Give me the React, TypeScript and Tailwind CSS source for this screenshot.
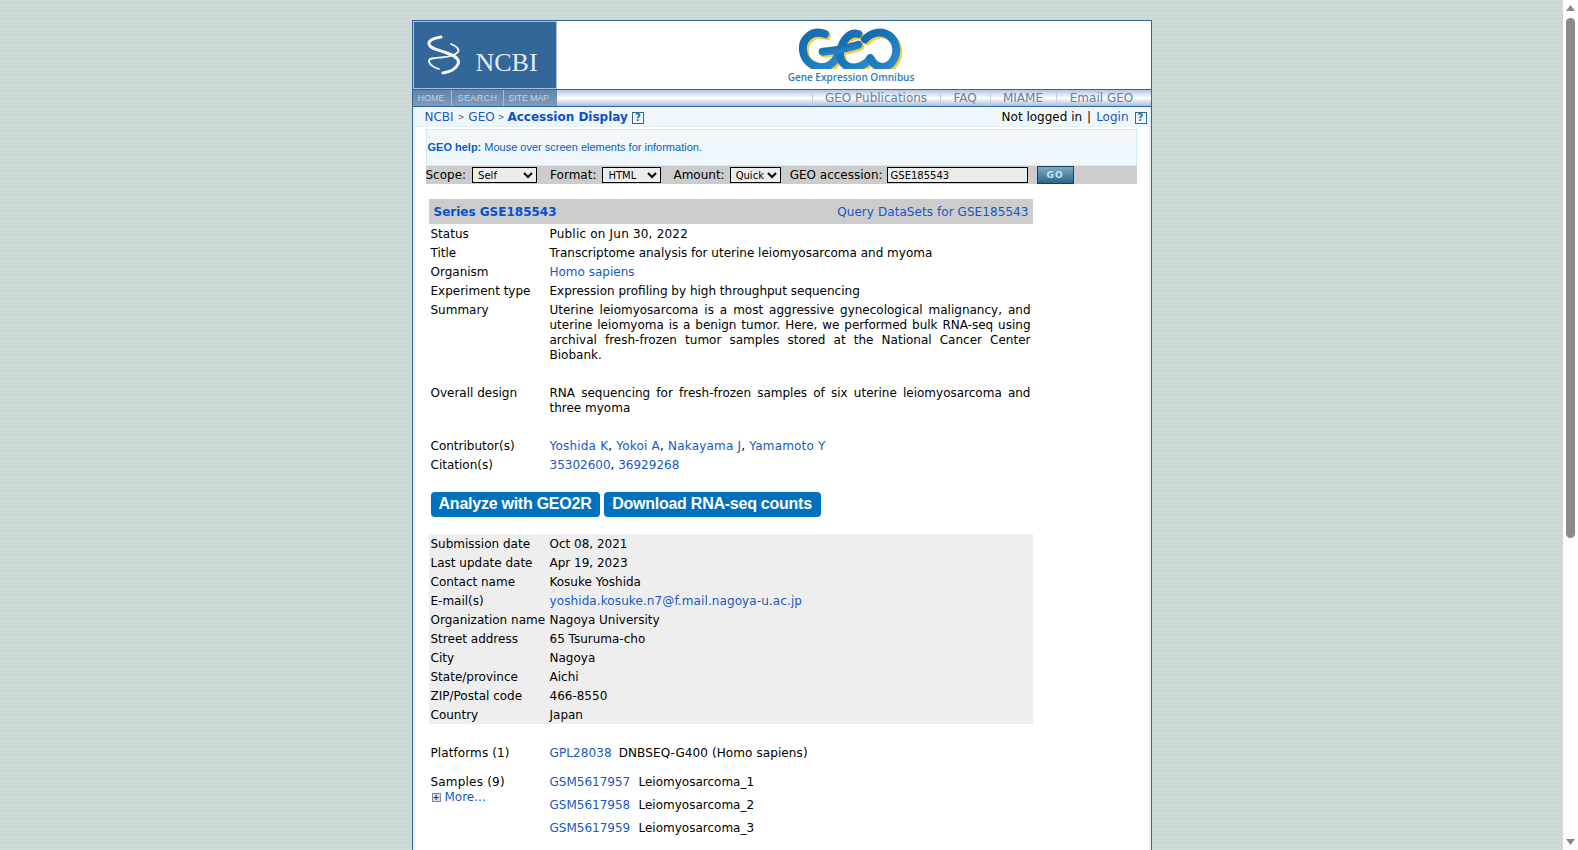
const LINK = "text-[#1558c8]";

const TOP_LINKS = [
  { label: "GEO Publications", w: "w-[128px]" },
  { label: "FAQ", w: "w-[50px]" },
  { label: "MIAME", w: "w-[66px]" },
  { label: "Email GEO", w: "w-[91px]" },
];

const CONTACT = [
  ["Submission date", "Oct 08, 2021"],
  ["Last update date", "Apr 19, 2023"],
  ["Contact name", "Kosuke Yoshida"],
  ["E-mail(s)", "yoshida.kosuke.n7@f.mail.nagoya-u.ac.jp"],
  ["Organization name", "Nagoya University"],
  ["Street address", "65 Tsuruma-cho"],
  ["City", "Nagoya"],
  ["State/province", "Aichi"],
  ["ZIP/Postal code", "466-8550"],
  ["Country", "Japan"],
];

function HelpMark() {
  return (
    <span className="inline-flex h-[12px] w-[12px] items-center justify-center border border-[#336699] text-[10px] leading-none font-bold text-[#336699]">
      ?
    </span>
  );
}

function HelixLogo() {
  return (
    <svg width="34" height="40" viewBox="0 0 34 40" className="shrink-0">
      <g fill="none" stroke="#f4f7fa" strokeLinecap="round">
        <path d="M14 2 C7 3 1.5 5 2 9 C3 14 12 15 20 18 C28 21 33 24 31 29 C29 34 22 37 16 38" strokeWidth="3" />
        <path d="M24 9 C29 11 33 14 31 17 C28 21 20 22 14 22.5 C8 23 2 23 2 26 C2 30 8 33 12 34" strokeWidth="1.8" />
      </g>
    </svg>
  );
}

function GeoLogo() {
  const strokes = [
    "M132 42 C95 28 62 55 66 92 C70 130 110 150 140 138 C158 130 168 115 172 100",
    "M232 42 C205 35 185 60 178 92 C172 125 195 145 225 142 C245 138 258 128 268 115",
    "M125 95 C160 92 200 85 232 74",
    "M268 115 C278 140 310 150 330 130 C352 105 352 70 325 47 C300 30 270 38 252 58",
  ];
  return (
    <svg width="140" height="48" viewBox="0 0 420 144" className="shrink-0">
      <defs>
        <linearGradient id="geoBlue" x1="0" y1="0" x2="1" y2="1">
          <stop offset="0" stopColor="#1469ab" />
          <stop offset="0.5" stopColor="#1a78bf" />
          <stop offset="1" stopColor="#2a8ccf" />
        </linearGradient>
      </defs>
      <g transform="translate(0 -3)">
        <g fill="none" stroke="#f6cc45" strokeWidth="24" strokeLinecap="round" transform="translate(6 6)">
          {strokes.map((d) => (
            <path key={d} d={d} />
          ))}
        </g>
        <g fill="none" stroke="url(#geoBlue)" strokeWidth="24" strokeLinecap="round">
          {strokes.map((d) => (
            <path key={d} d={d} />
          ))}
        </g>
      </g>
    </svg>
  );
}

function Row({ label, children, className = "" }: { label: string; children: React.ReactNode; className?: string }) {
  return (
    <div className={`flex pl-[2px] ${className}`}>
      <div className="w-[119px] shrink-0 pt-[3px] pb-[1px]">{label}</div>
      <div className="min-w-0 flex-1 pt-[3px] pr-[2px] pb-[1px]">{children}</div>
    </div>
  );
}

function Sample({ id, title }: { id: string; title: string }) {
  return (
    <div className="flex h-[23px] items-center pt-[2px]">
      <a className={`${LINK} w-[89px]`}>{id}</a>
      <span>{title}</span>
    </div>
  );
}

export default function App() {
  return (
    <div className="flex h-screen overflow-hidden font-['DejaVu_Sans',Verdana,sans-serif] text-[12px] leading-[15px] text-black">
      <main className="min-w-0 flex-1 bg-[#cdd9d6] bg-[repeating-linear-gradient(180deg,#cfdbd8_0px,#cfdbd8_2px,#cad7d4_2px,#cad7d4_4px)] pt-[20px]">
        <div className="mx-auto flex min-h-full w-[740px] flex-col border-x border-[#336699] bg-white">
          {/* Masthead */}
          <div className="flex h-[69px] border-t border-[#336699]">
            <div className="flex h-full w-[144px] shrink-0 items-start gap-[15px] border border-[#a9c0d6] bg-[#336699] pt-[13px] pl-[13px]">
              <HelixLogo />
              <span className="mt-[15px] font-['Liberation_Serif',serif] text-[26px] leading-[26px] text-[#e4ebf2]">NCBI</span>
            </div>
            <div className="flex flex-1 flex-col items-center pr-[5px]">
              <GeoLogo />
              <span className="mt-[1px] font-['Open_Sans',sans-serif] text-[10px] leading-[15px] font-semibold text-[#2b7cb8]">
                Gene Expression Omnibus
              </span>
            </div>
          </div>

          <div className="flex h-[18px] border-y border-[#336699]">
            <div className="flex w-[144px] shrink-0 bg-gradient-to-b from-[#5f86ab] to-[#7c9cbc] font-['Liberation_Sans',Arial,sans-serif] text-[9px] leading-[16px] whitespace-nowrap text-[#c3d1e0]">
              <span className="w-[39px] border-r border-[#a3bacf] pl-[5px]">HOME</span>
              <span className="w-[52px] border-r border-[#a3bacf] pl-[6px] tracking-[0.4px]">SEARCH</span>
              <span className="pl-[5px] tracking-[-0.2px]">SITE MAP</span>
            </div>
            <div className="flex flex-1 justify-end bg-gradient-to-b from-[#b3c5de] via-white to-[#a9bcd9] pr-[4px]">
              {TOP_LINKS.map((l) => (
                <span
                  key={l.label}
                  className={`${l.w} flex items-center justify-center border-l border-[#c2d2e6] pt-[1px] text-[#6b7d9c]`}
                >
                  {l.label}
                </span>
              ))}
            </div>
          </div>

          {/* Page body */}
          <div className="flex flex-1 flex-col border-x-[2px] border-[#e6f2f4]">
            <div className="flex h-[20px] items-center justify-between border-b border-[#e6f2f4] bg-[#eff7fd] pt-[2px] pr-[2px] pl-[10px]">
              <div className="flex items-center">
                <a className={LINK}>NCBI</a>
                <span className="px-[4px] text-[8px] text-[#555555]">&gt;</span>
                <a className={LINK}>GEO</a>
                <span className="px-[3px] text-[8px] text-[#555555]">&gt;</span>
                <span className="font-bold text-[#0a50c8]">Accession Display</span>
                <span className="ml-[4px] flex"><HelpMark /></span>
              </div>
              <div className="flex items-center">
                <span>Not logged in</span>
                <span className="mx-[5px]">|</span>
                <a className={LINK}>Login</a>
                <span className="ml-[6px] flex"><HelpMark /></span>
              </div>
            </div>

            <div className="mt-[2px] ml-[11px] w-[711px]">
              <div className="flex h-[37px] items-center border border-[#c4f0f4] bg-[#eff7fd] pl-[1px] font-['Liberation_Sans',Arial,sans-serif] text-[11px] text-[#0b5cbf]">
                <b className="mr-[3px]">GEO help:</b> Mouse over screen elements for information.
              </div>
              <div className="flex h-[18px] items-center bg-[#cccccc]">
                <span className="mr-[6px]">Scope:</span>
                <select defaultValue="Self" className="h-[16px] w-[65px] border border-black bg-[#ececec] pl-[1px] text-[10px] leading-none">
                  <option>Self</option>
                </select>
                <span className="mr-[6px] ml-[13px]">Format:</span>
                <select defaultValue="HTML" className="h-[16px] w-[59px] border border-black bg-[#ececec] pl-[1px] text-[10px] leading-none">
                  <option>HTML</option>
                </select>
                <span className="mr-[5px] ml-[12px]">Amount:</span>
                <select defaultValue="Quick" className="h-[16px] w-[51px] border border-black bg-[#ececec] pl-[1px] text-[10px] leading-none">
                  <option>Quick</option>
                </select>
                <span className="mr-[4px] ml-[9px]">GEO accession:</span>
                <input
                  readOnly
                  value="GSE185543"
                  className="h-[16px] w-[141px] border border-black bg-[#ececec] pl-[3px] text-[10px]"
                />
                <button className="ml-[9px] h-[18px] w-[37px] border border-[#1c3d55] bg-gradient-to-b from-[#7aacc6] to-[#2f6688] text-[9px] leading-none font-bold tracking-[1px] text-[#d5e2ea]">
                  GO
                </button>
              </div>
            </div>

            {/* Series record */}
            <div className="mt-[15px] ml-[14px] w-[604px]">
              <div className="flex h-[25px] items-center justify-between bg-[#cccccc] pt-[1px] pr-[4px] pl-[5px]">
                <span className="font-bold text-[#0a50c8]">Series GSE185543</span>
                <a className={`${LINK} tracking-[0.07px]`}>Query DataSets for GSE185543</a>
              </div>

              <Row label="Status"><span className="tracking-[0.2px]">Public on Jun 30, 2022</span></Row>
              <Row label="Title">Transcriptome analysis for uterine leiomyosarcoma and myoma</Row>
              <Row label="Organism"><a className={LINK}>Homo sapiens</a></Row>
              <Row label="Experiment type">Expression profiling by high throughput sequencing</Row>
              <Row label="Summary" className="pb-[19px]">
                <div className="text-justify">
                  Uterine leiomyosarcoma is a most aggressive gynecological malignancy, and uterine leiomyoma is a benign
                  tumor. Here, we performed bulk RNA-seq using archival fresh-frozen tumor samples stored at the National
                  Cancer Center Biobank.
                </div>
              </Row>
              <Row label="Overall design" className="pb-[19px]">
                <div className="text-justify">RNA sequencing for fresh-frozen samples of six uterine leiomyosarcoma and three myoma</div>
              </Row>
              <Row label="Contributor(s)">
                <span className="tracking-[0.2px]">
                  <a className={LINK}>Yoshida K</a>, <a className={LINK}>Yokoi A</a>, <a className={LINK}>Nakayama J</a>,{" "}
                  <a className={LINK}>Yamamoto Y</a>
                </span>
              </Row>
              <Row label="Citation(s)">
                <a className={LINK}>35302600</a>, <a className={LINK}>36929268</a>
              </Row>

              <div className="mt-[18px] mb-[17px] ml-[2px] flex gap-[4px] font-['Liberation_Sans',Arial,sans-serif] text-[16px] font-bold tracking-[-0.25px] text-white">
                <a className="flex h-[25px] w-[169px] items-center justify-center rounded-[4px] bg-[#0071bc] pb-[2px]">Analyze with GEO2R</a>
                <a className="flex h-[25px] w-[217px] items-center justify-center rounded-[4px] bg-[#0071bc] pb-[2px]">Download RNA-seq counts</a>
              </div>

              <div className="bg-[#eeeeee]">
                {CONTACT.map(([label, value]) => (
                  <Row key={label} label={label}>
                    {label === "E-mail(s)" ? <a className={`${LINK} tracking-[0.1px]`}>{value}</a> : value}
                  </Row>
                ))}
              </div>

              <div className="mt-[19px]">
                <Row label="Platforms (1)" className="tracking-[0.1px]">
                  <a className={`${LINK} mr-[7px]`}>GPL28038</a>DNBSEQ-G400 (Homo sapiens)
                </Row>
              </div>

              <div className="mt-[8px] flex pl-[2px]">
                <div className="w-[119px] shrink-0 pt-[5px]">
                  <div className="tracking-[0.2px]">Samples (9)</div>
                  <div className="ml-[1px] flex items-center gap-[4px]">
                    <span className="flex h-[9px] w-[9px] items-center justify-center border border-[#8a8a8a] bg-[#d8dfe8] text-[8px] leading-none font-bold text-[#333333]">+</span>
                    <a className={LINK}>More...</a>
                  </div>
                </div>
                <div>
                  <Sample id="GSM5617957" title="Leiomyosarcoma_1" />
                  <Sample id="GSM5617958" title="Leiomyosarcoma_2" />
                  <Sample id="GSM5617959" title="Leiomyosarcoma_3" />
                </div>
              </div>
            </div>
          </div>
        </div>
      </main>

      {/* Scrollbar */}
      <aside className="flex w-[15px] shrink-0 flex-col items-center bg-[#fdfdfd]">
        <svg width="9" height="6" viewBox="0 0 9 6" className="mt-[5px]"><path d="M4.5 0 L9 6 H0 Z" fill="#8a8a8a" /></svg>
        <div className="mt-[7px] h-[520px] w-[9px] rounded-[5px] bg-[#8a8a8a]" />
        <svg width="9" height="6" viewBox="0 0 9 6" className="mt-auto mb-[5px]"><path d="M0 0 H9 L4.5 6 Z" fill="#8a8a8a" /></svg>
      </aside>
    </div>
  );
}
